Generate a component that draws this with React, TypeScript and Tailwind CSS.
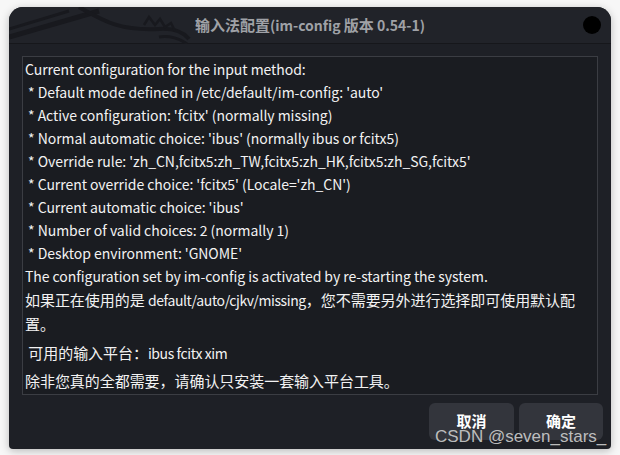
import React from 'react'

const lines = [
  'Current configuration for the input method:',
  " * Default mode defined in /etc/default/im-config: 'auto'",
  " * Active configuration: 'fcitx' (normally missing)",
  " * Normal automatic choice: 'ibus' (normally ibus or fcitx5)",
  " * Override rule: 'zh_CN,fcitx5:zh_TW,fcitx5:zh_HK,fcitx5:zh_SG,fcitx5'",
  " * Current override choice: 'fcitx5' (Locale='zh_CN')",
  " * Current automatic choice: 'ibus'",
  ' * Number of valid choices: 2 (normally 1)',
  " * Desktop environment: 'GNOME'",
  'The configuration set by im-config is activated by re-starting the system.',
]

function Dragon() {
  return (
    <svg width="200" height="37" viewBox="0 0 200 37" className="absolute left-0 top-0" fill="none">
      <path d="M0 30 L90 4" stroke="#18191e" strokeWidth="5" />
      <path d="M0 22 L60 4" stroke="#18191e" strokeWidth="3" />
      <path d="M70 0 C95 14 110 24 150 22 C165 21 175 26 180 32" stroke="#18191e" strokeWidth="4" />
      <path d="M135 18 L140 10 L146 18 L151 12 L156 20 L162 16 L166 24" stroke="#18191e" strokeWidth="2.5" />
      <path d="M150 30 C160 28 172 32 178 37" stroke="#18191e" strokeWidth="3" />
    </svg>
  )
}

export default function App() {
  return (
    <div className="w-[620px] h-[455px] bg-[#f7f7f7] pt-[7px] pl-[9px] relative overflow-hidden" style={{ fontFamily: '"Noto Sans CJK SC", "Noto Sans", sans-serif' }}>
      <div className="w-[602px] h-[442px] bg-[#1e2026] rounded-t-[14px] rounded-b-[4px] shadow-[0_2px_8px_rgba(0,0,0,0.25)] flex flex-col overflow-hidden">
        {/* Title bar */}
        <div className="relative h-[37px] shrink-0 bg-[#212329] border-b border-[#16171b] flex items-center justify-center">
          <Dragon />
          <span className="relative text-[15px] font-bold text-[#9fa1a6]">
            输入法配置<span className="text-[14px]">(im-config </span>版本<span className="text-[14px]"> 0.54-1)</span>
          </span>
          <div className="absolute right-[10px] top-[9px] w-[18px] h-[18px] rounded-full bg-black" />
        </div>

        {/* Body */}
        <div className="flex-1 flex flex-col px-[13px] pt-[12px] pb-[8px]">
          <div className="h-[339px] bg-[#1a1c21] border border-[#3b3d43] pl-[2px] pt-[1px] text-[14px] leading-[23px] text-[#f2f2f2] whitespace-pre tracking-[-0.05px]">
            {lines.map((l) => (
              <div key={l}>{l}</div>
            ))}
            <div className="text-[15px]">如果正在使用的是 <span className="text-[14px] tracking-[-0.4px]">default/auto/cjkv/missing</span>，您不需要另外进行选择即可使用默认配</div>
            <div className="text-[15px]">置。</div>
            <div className="text-[15px] mt-[6px]"> 可用的输入平台：<span className="text-[14px] tracking-[-0.4px]">ibus fcitx xim</span></div>
            <div className="text-[15px] mt-[4px]">除非您真的全都需要，请确认只安装一套输入平台工具。</div>
          </div>
          <div className="flex justify-end gap-[5px] mt-[8px] -mr-[5px]">
            <button className="w-[85px] h-[37px] rounded-[6px] bg-[#33353c] text-white text-[15px] font-bold">取消</button>
            <button className="w-[84px] h-[37px] rounded-[6px] bg-[#33353c] text-white text-[15px] font-bold">确定</button>
          </div>
        </div>
      </div>
      <div className="absolute left-[435px] top-[427px] text-[17px] leading-[19px] text-[#d0d0d0]/90" style={{ fontFamily: '"Liberation Sans", Arial, sans-serif' }}>
        CSDN @seven_stars_
      </div>
    </div>
  )
}
